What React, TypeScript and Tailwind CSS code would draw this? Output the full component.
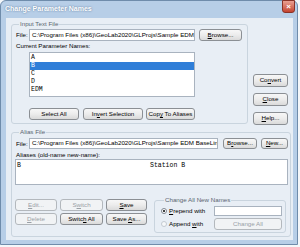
import React from 'react';

const btn =
  "flex items-center justify-center whitespace-pre rounded-[3px] border border-[#8b8f94] bg-linear-to-b from-[#f7f7f7] via-[#ececec] to-[#dadada] text-[6.2px] leading-none text-black";
const btnOff =
  "flex items-center justify-center whitespace-pre rounded-[3px] border border-[#b3b8bd] bg-[#f1f3f5] text-[6.2px] leading-none text-[#9aa0a6]";
const field = "h-full bg-white border border-[#a9b3bf] overflow-hidden whitespace-nowrap text-[6.2px] leading-none flex items-center pl-[2px]";
const group = "border border-[#c9d4de] rounded-[3px]";
const legend = "ml-[3px] px-[1px] h-[8px] leading-[8px] text-[6.2px] text-[#5a6570]";

// label with one underlined access key
function L({ a, k, b }: { a?: string; k: string; b?: string }) {
  return (
    <span>
      {a}
      <span className="underline">{k}</span>
      {b}
    </span>
  );
}

export default function App() {
  return (
    <div className="w-[300px] h-[247px] bg-[#f4f7fa] overflow-hidden font-['Liberation_Sans',Arial,sans-serif] text-[6.2px] text-black">
      <div className="w-[298px] h-[245px] bg-[#b7cee7] border border-[#6f8cab] rounded-t-[6px] flex flex-col">
        {/* title bar */}
        <div className="h-[17px] flex items-start justify-between pl-[4px] pr-[2px]">
          <span className="mt-[3px] text-[7px] font-bold text-white [text-shadow:0_0_2px_#4d6c8f]">
            Change Parameter Names
          </span>
          <div className="w-[13px] h-[13px] -mt-[1px] rounded-b-[3px] border border-[#8a3328] bg-linear-to-b from-[#e9a093] to-[#c4422f] flex items-center justify-center text-white text-[8px] font-bold leading-none">
            ×
          </div>
        </div>

        {/* client */}
        <div className="ml-[5px] mr-[4px] h-[222px] bg-[#e8eef5] px-[5px] pt-[2px]">
          <div className="flex items-start">
            <fieldset className={group + " w-[237px] pl-[4px] pb-[3px]"}>
              <legend className={legend}>Input Text File</legend>
              <div className="mt-[1px] h-[12px] flex items-center">
                <span className="w-[13px]">File:</span>
                <div className={field + " w-[166px]"}>C:\Program Files (x86)\GeoLab2020\GLProjs\Sample EDM BaseLine\</div>
                <div className={btn + " ml-[4px] w-[43px] h-[12px]"}><L k="B" b="rowse..." /></div>
              </div>
              <div className="mt-[1px] h-[8px] leading-[8px]">Current Parameter Names:</div>
              <div className="mt-[2px] ml-[13px] w-[166px] h-[45px] bg-white border border-[#a9b3bf] pt-[1px] font-['Liberation_Mono',monospace] text-[6.5px]">
                {["A", "B", "C", "D", "EDM"].map((n) => (
                  <div
                    key={n}
                    className={
                      "h-[8px] leading-[8px] pl-[1px] " + (n === "B" ? "bg-[#2f7ed8] text-white" : "")
                    }
                  >
                    {n}
                  </div>
                ))}
              </div>
              <div className="mt-[11px] ml-[13px] flex gap-[4px]">
                <div className={btn + " w-[50px] h-[12px]"}>Select All</div>
                <div className={btn + " w-[60px] h-[12px]"}><L a="In" k="v" b="ert Selection" /></div>
                <div className={btn + " w-[49px] h-[12px] -ml-[1px]"}><L a="Cop" k="y" b=" To Aliases" /></div>
              </div>
            </fieldset>
            <div className="ml-[5px] mt-[54px] flex flex-col gap-[6px]">
              <div className={btn + " w-[35px] h-[13px]"}><L a="Co" k="n" b="vert" /></div>
              <div className={btn + " w-[35px] h-[13px]"}><L k="C" b="lose" /></div>
              <div className={btn + " w-[35px] h-[13px]"}><L k="H" b="elp..." /></div>
            </div>
          </div>

          <fieldset className={group + " mt-[3px] w-[280px] pl-[4px] pb-[3px]"}>
            <legend className={legend}>Alias File</legend>
            <div className="mt-[2px] h-[11px] flex items-center">
              <span className="w-[13px]">File:</span>
              <div className={field + " w-[189px]"}>C:\Program Files (x86)\GeoLab2020\GLProjs\Sample EDM BaseLine\</div>
              <div className={btn + " ml-[5px] w-[34px] h-[11px]"}><L a="B" k="r" b="owse..." /></div>
              <div className={btn + " ml-[4px] w-[27px] h-[11px]"}><L k="N" b="ew..." /></div>
            </div>
            <div className="mt-[2px] h-[8px] leading-[8px]">Aliases (old-name new-name):</div>
            <div className="-ml-[1px] w-[273px] h-[26px] bg-white border border-[#a9b3bf] pt-[2px] pl-[1px] flex font-['Liberation_Mono',monospace] text-[6.5px] leading-[8px]">
              <span className="w-[133px]">B</span>
              <span>Station B</span>
            </div>
            <div className="mt-[11px] -ml-[1px] flex items-start">
              <div className="mt-[3px] grid grid-cols-[42px_43px_41px] gap-x-[3px] gap-y-[2px]">
                <div className={btnOff + " h-[12px]"}><L k="E" b="dit..." /></div>
                <div className={btnOff + " h-[12px]"}><L a="S" k="w" b="itch" /></div>
                <div className={btn + " h-[12px]"}><L k="S" b="ave" /></div>
                <div className={btnOff + " h-[12px]"}><L k="D" b="elete" /></div>
                <div className={btn + " h-[12px]"}><L a="Switc" k="h" b=" All" /></div>
                <div className={btn + " h-[12px]"}><L a="Save " k="A" b="s..." /></div>
              </div>
              <fieldset className={group + " ml-[7px] w-[132px] pl-[6px] pb-[2px]"}>
                <legend className={legend}>Change All New Names</legend>
                <div className="mt-[2px] h-[10px] flex items-center">
                  <div className="w-[6px] h-[6px] rounded-full border border-[#7d8590] bg-white flex items-center justify-center">
                    <div className="w-[2px] h-[2px] rounded-full bg-black" />
                  </div>
                  <span className="ml-[2px] w-[45px]"><L k="P" b="repend with" /></span>
                  <div className="w-[68px] h-[10px] bg-white border border-[#a9b3bf]" />
                </div>
                <div className="mt-[2px] h-[12px] flex items-center">
                  <div className="w-[6px] h-[6px] rounded-full border border-[#c4cad1] bg-[#f6f8fa]" />
                  <span className="ml-[2px] w-[45px]"><L a="Append " k="w" b="ith" /></span>
                  <div className={btnOff + " w-[68px] h-[12px]"}>Change All</div>
                </div>
              </fieldset>
            </div>
          </fieldset>
        </div>
      </div>
    </div>
  );
}
